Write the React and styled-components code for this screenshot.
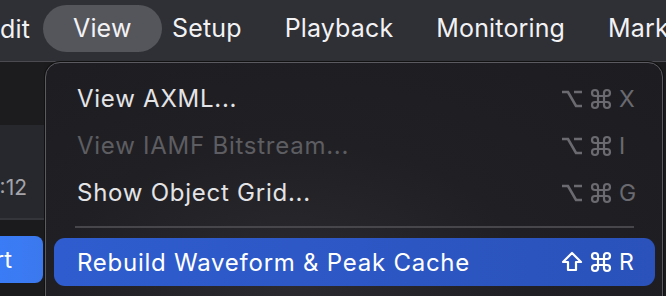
import React from "react";
import styled, { createGlobalStyle } from "styled-components";

const Global = createGlobalStyle`
  html, body { margin: 0; padding: 0; background: #1b1b1e; overflow: hidden; }
  body { width: 666px; height: 296px; font-family: Inter, "Noto Sans", "Liberation Sans", sans-serif; }
  #root { width: 666px; height: 296px; }
`;

const Screen = styled.div`
  position: relative;
  width: 666px;
  height: 296px;
  display: flex;
  flex-direction: column;
  overflow: hidden;
  background: #1b1b1e;
`;

const MenuBar = styled.div`
  height: 61px;
  flex: none;
  display: flex;
  align-items: center;
  background: #2f2f36;
  border-bottom: 1px solid #4a4a50;
  white-space: nowrap;
`;

const BarItem = styled.div`
  flex: none;
  font-size: 25px;
  color: #f2f2f4;
  letter-spacing: 0.15px;
  height: 47px;
  line-height: 47px;
  margin-top: -4px;
  padding: ${(p) => (p.$active ? "0 30px" : "0 21.5px")};
  margin-right: ${(p) => (p.$active ? "-11px" : "0")};
  border-radius: 24px;
  background: ${(p) => (p.$active ? "#55555c" : "transparent")};
`;

const EdgeItem = styled.div`
  flex: none;
  width: 30px;
  margin-right: 13px;
  overflow: hidden;
  display: flex;
  justify-content: flex-end;
  font-size: 25px;
  letter-spacing: 0.15px;
  color: #f2f2f4;
  margin-top: -4px;
`;

const Body = styled.div`
  flex: 1;
  display: flex;
`;

const LeftCol = styled.div`
  width: 44px;
  flex: none;
  display: flex;
  flex-direction: column;
`;

const TopStrip = styled.div`
  height: 63px;
  background: #1c1c1f;
`;

const TimePanel = styled.div`
  height: 95px;
  background: #27282d;
  border-bottom: 2px solid #34353a;
  display: flex;
  align-items: flex-end;
  justify-content: flex-end;
  padding: 0 17px 18px 0;
  box-sizing: border-box;
  overflow: hidden;
  color: #a4a4aa;
  font-size: 21px;
  white-space: nowrap;
`;

const BtnZone = styled.div`
  padding-top: 16px;
  display: flex;
`;

const BlueBtn = styled.div`
  width: 43px;
  height: 47px;
  border-radius: 0 8px 8px 0;
  background: linear-gradient(90deg, #3a7cf6, #3b78ee);
  color: #fff;
  font-size: 24px;
  display: flex;
  align-items: center;
  justify-content: flex-end;
  padding-right: 31px;
  box-sizing: border-box;
  overflow: hidden;
  white-space: nowrap;
`;

const Dropdown = styled.div`
  position: absolute;
  left: 45px;
  top: 62px;
  width: 618px;
  height: 260px;
  box-sizing: border-box;
  border: 1.5px solid #5a5a60;
  border-radius: 15px;
  background: radial-gradient(ellipse at 40% 85%, #2a2a2f 0%, #202024 45%, #1d1d21 100%);
  padding: 12px 7px 0 8px;
  display: flex;
  flex-direction: column;
  box-shadow: 0 0 0 1px #111;
`;

const Item = styled.div`
  height: ${(p) => (p.$selected ? "48px" : "47px")};
  display: flex;
  align-items: center;
  justify-content: space-between;
  padding: 0 18px 0 23px;
  border-radius: 11px;
  font-size: 24px;
  letter-spacing: 0.75px;
  color: ${(p) => (p.$selected ? "#ffffff" : p.$disabled ? "#5d5d62" : "#e4e4e7")};
  background: ${(p) =>
    p.$selected ? "linear-gradient(90deg, #2f5dcf 0%, #2c56c2 60%, #2a52ba 100%)" : "transparent"};
  white-space: nowrap;
`;

const Shortcut = styled.span`
  display: flex;
  align-items: center;
  justify-content: flex-start;
  width: 76px;
  gap: 7px;
  font-size: 23px;
  letter-spacing: 0;
  color: ${(p) => (p.$selected ? "#ffffff" : "#6a6a70")};
`;

const Sep = styled.div`
  height: 2px;
  background: #46464b;
  margin: 10px 21px 10px 21px;
`;

const ShiftIcon = () => (
  <svg width="22" height="22" viewBox="0 0 22 22">
    <path d="M11 2 L20 11 L15 11 L15 19 L7 19 L7 11 L2 11 Z" fill="none" stroke="#fff" strokeWidth="2.2" strokeLinejoin="round" />
  </svg>
);

const OptIcon = ({ color }) => (
  <svg width="22" height="20" viewBox="0 0 22 20">
    <path d="M1 3 H7 L15 17 H21 M13 3 H21" fill="none" stroke={color} strokeWidth="2.6" />
  </svg>
);

const CmdIcon = ({ color }) => (
  <svg width="22" height="22" viewBox="0 0 22 22">
    <path
      d="M8 8 V5 A3 3 0 1 0 5 8 H17 A3 3 0 1 0 14 5 V17 A3 3 0 1 0 17 14 H5 A3 3 0 1 0 8 17 V8"
      fill="none"
      stroke={color}
      strokeWidth="2.2"
    />
  </svg>
);

const items = [
  { label: "View AXML...", keys: ["opt", "cmd", "X"] },
  { label: "View IAMF Bitstream...", keys: ["opt", "cmd", "I"], disabled: true },
  { label: "Show Object Grid...", keys: ["opt", "cmd", "G"] },
];

const KeyRow = ({ keys, selected }) => {
  const c = selected ? "#ffffff" : "#6a6a70";
  return (
    <Shortcut $selected={selected}>
      {keys.map((k, i) =>
        k === "opt" ? (
          <OptIcon key={i} color={c} />
        ) : k === "cmd" ? (
          <CmdIcon key={i} color={c} />
        ) : k === "shift" ? (
          <ShiftIcon key={i} />
        ) : (
          <span key={i}>{k}</span>
        )
      )}
    </Shortcut>
  );
};

export default function App() {
  return (
    <>
      <Global />
      <Screen>
        <MenuBar>
          <EdgeItem>Edit</EdgeItem>
          <BarItem $active>View</BarItem>
          <BarItem>Setup</BarItem>
          <BarItem>Playback</BarItem>
          <BarItem>Monitoring</BarItem>
          <BarItem>Markers</BarItem>
        </MenuBar>
        <Body>
          <LeftCol>
            <TopStrip />
            <TimePanel>00:00:12</TimePanel>
            <BtnZone>
              <BlueBtn>Import</BlueBtn>
            </BtnZone>
          </LeftCol>
        </Body>
        <Dropdown>
          {items.map((it) => (
            <Item key={it.label} $disabled={it.disabled}>
              <span>{it.label}</span>
              <KeyRow keys={it.keys} />
            </Item>
          ))}
          <Sep />
          <Item $selected>
            <span>Rebuild Waveform &amp; Peak Cache</span>
            <KeyRow keys={["shift", "cmd", "R"]} selected />
          </Item>
        </Dropdown>
      </Screen>
    </>
  );
}
